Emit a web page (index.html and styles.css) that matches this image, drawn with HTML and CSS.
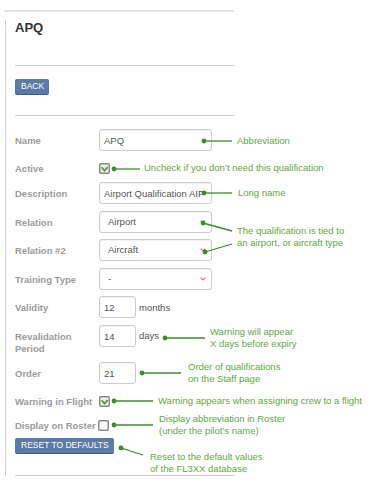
FILE: index.html
```html
<!doctype html>
<html lang=en>
<head>
	<meta charset=utf-8>
	<title>APQ</title>
	<link rel="stylesheet" href="styles.css">
</head>
<body>
	<div class="topline"></div>
	<div class="panel">
		<h1>APQ</h1>
		<hr class="under-title">
		<button class="btn" type="button">Back</button>
		<hr class="after-back">

		<form class="qual">
			<div class="row r-name">
				<label>Name</label>
				<input class="field" value="APQ">
			</div>
			<div class="row r-check r-active">
				<label>Active</label>
				<span class="box"><svg width="11" height="11" viewBox="0 0 11 11"><rect x="0.75" y="0.75" width="9.5" height="9.5" rx="1" fill="#eeeeee" stroke="#8a8a8a" stroke-width="1.5"/><polyline points="2.6,4.3 5.5,7.6 8.6,4.1" fill="none" stroke="#4f9c38" stroke-width="1.7"/></svg></span>
			</div>
			<div class="row r-desc">
				<label>Description</label>
				<input class="field" value="Airport Qualification AIP">
			</div>
			<div class="row r-rel">
				<label>Relation</label>
				<div class="field select">Airport<svg class="chev" width="6" height="4" viewBox="0 0 6 4"><polyline points="0.6,0.6 3,3 5.4,0.6" fill="none" stroke="#e8744e" stroke-width="1.2"/></svg></div>
			</div>
			<div class="row r-rel2">
				<label>Relation #2</label>
				<div class="field select">Aircraft<svg class="chev" width="6" height="4" viewBox="0 0 6 4"><polyline points="0.6,0.6 3,3 5.4,0.6" fill="none" stroke="#e8744e" stroke-width="1.2"/></svg></div>
			</div>
			<div class="row r-type">
				<label>Training Type</label>
				<div class="field select">-<svg class="chev" width="6" height="4" viewBox="0 0 6 4"><polyline points="0.6,0.6 3,3 5.4,0.6" fill="none" stroke="#e8744e" stroke-width="1.2"/></svg></div>
			</div>
			<div class="row r-valid">
				<label>Validity</label>
				<input class="field short" value="12">
				<span class="unit">months</span>
			</div>
			<div class="row r-reval">
				<label>Revalidation Period</label>
				<input class="field short" value="14">
				<span class="unit">days</span>
			</div>
			<div class="row r-order">
				<label>Order</label>
				<input class="field short" value="21">
			</div>
			<div class="row r-check r-warn">
				<label>Warning in Flight</label>
				<span class="box"><svg width="11" height="11" viewBox="0 0 11 11"><rect x="0.75" y="0.75" width="9.5" height="9.5" rx="1" fill="#eeeeee" stroke="#8a8a8a" stroke-width="1.5"/><polyline points="2.6,4.3 5.5,7.6 8.6,4.1" fill="none" stroke="#4f9c38" stroke-width="1.7"/></svg></span>
			</div>
			<div class="row r-check r-roster">
				<label>Display on Roster</label>
				<span class="box"><svg width="11" height="11" viewBox="0 0 11 11"><rect x="0.75" y="0.75" width="9.5" height="9.5" rx="1" fill="#ffffff" stroke="#8a8a8a" stroke-width="1.5"/></svg></span>
			</div>
			<button class="btn reset" type="button">Reset to defaults</button>
		</form>

		<hr class="bottom">
	</div>

	<!-- callouts drawn over the form -->
	<svg class="callouts" width="371" height="485" viewBox="0 0 371 485">
		<g stroke="#3d8c2b" stroke-width="1.3" fill="none">
			<line x1="204" y1="141" x2="232" y2="141"/>
			<line x1="114" y1="169" x2="140" y2="169"/>
			<line x1="204" y1="193" x2="232" y2="193"/>
			<line x1="203" y1="223" x2="232" y2="231"/>
			<line x1="205" y1="252" x2="232" y2="244"/>
			<line x1="165" y1="338" x2="205" y2="338"/>
			<line x1="142" y1="373" x2="181" y2="373"/>
			<line x1="114" y1="401" x2="153" y2="401"/>
			<line x1="114" y1="425" x2="153" y2="425"/>
			<line x1="121" y1="448" x2="143" y2="455"/>
		</g>
		<g fill="#3d8c2b">
			<circle cx="204" cy="141" r="2.4"/>
			<circle cx="114" cy="169" r="2.4"/>
			<circle cx="204" cy="193" r="2.4"/>
			<circle cx="203" cy="223" r="2.4"/>
			<circle cx="205" cy="252" r="2.4"/>
			<circle cx="165" cy="338" r="2.4"/>
			<circle cx="142" cy="373" r="2.4"/>
			<circle cx="114" cy="401" r="2.4"/>
			<circle cx="114" cy="425" r="2.4"/>
			<circle cx="121" cy="448" r="2.4"/>
		</g>
	</svg>
	<div class="note n-abbr">Abbreviation</div>
	<div class="note n-active">Uncheck if you don’t need this qualification</div>
	<div class="note n-long">Long name</div>
	<div class="note n-rel">The qualification is tied to<br>an airport, or aircraft type</div>
	<div class="note n-reval">Warning will appear<br>X days before expiry</div>
	<div class="note n-order">Order of qualifications<br>on the Staff page</div>
	<div class="note n-warn">Warning appears when assigning crew to a flight</div>
	<div class="note n-roster">Display abbreviation in Roster<br>(under the pilot’s name)</div>
	<div class="note n-reset">Reset to the default values<br>of the FL3XX database</div>
</body>
</html>
```

FILE: styles.css
```css
body	{ margin:0; position:relative; width:371px; height:485px; background:#fff;
		  font-family:"Liberation Sans", Arial, sans-serif; }

.topline { margin:10px 0 0 4px; width:230px; height:2px; background:#e3e3e3; }
.panel	{ margin:8px 0 0 5px; width:219px; padding-left:9px; border-left:1px solid #d2d2d2; }

h1		{ margin:1px 0 0; font-size:13px; line-height:15px; color:#333; }
hr		{ margin:30px 0 0; height:0; border:0; border-top:1px solid #cfcfcf; }
hr.after-back { margin-top:20px; }
hr.bottom { margin-top:21px; }

.btn	{ display:block; margin-top:13px; height:16px; padding:0 5px 0 6px;
		  font:8.5px/15px "Liberation Sans", Arial, sans-serif; text-transform:uppercase;
		  color:#fff; background:#5b7ba6; border:0; border-bottom:1px solid #3f5f88;
		  border-radius:2px; }
.btn.reset { margin-top:7px; padding:0 5px 0 6px; }

.qual	{ margin-top:13px; }
.row	{ display:flex; align-items:center; height:22px; }
.row label { flex:0 0 84px; font-size:9.5px; font-weight:bold; color:#9b9b9b; }
.r-check { height:11px; }

.r-active { margin-top:12px; }
.r-desc	{ margin-top:8px; }
.r-rel	{ margin-top:7px; }
.r-rel2	{ margin-top:6px; }
.r-type	{ margin-top:7px; }
.r-valid { margin-top:6px; }
.r-reval { margin-top:7px; align-items:flex-start; height:29px; }
.r-reval label { padding-top:6px; line-height:11.5px; }
.r-reval .unit { line-height:22px; }
.r-order { margin-top:8px; }
.r-warn	{ margin-top:12px; }
.r-roster { margin-top:13px; }
.r-roster .box { margin-left:-1px; }

.field	{ box-sizing:border-box; width:113px; height:22px; margin:0; padding:0 4px;
		  font:9.5px/20px "Liberation Sans", Arial, sans-serif; color:#555;
		  border:1px solid #cccccc; border-radius:3px; background:#fff;
		  box-shadow:inset 0 1px 1px rgba(0,0,0,0.05); outline:none; }
.field.short { width:37px; }
.select	{ position:relative; padding-left:8px; }
.chev	{ position:absolute; right:5px; top:8px; }
.unit	{ margin-left:3px; font-size:9.5px; color:#555; }
.box	{ display:block; width:11px; height:11px; }
.box svg { display:block; }

.callouts { position:absolute; left:0; top:0; pointer-events:none; }
.note	{ position:absolute; font-size:9.5px; line-height:11.5px; color:#62a842; white-space:nowrap; }
.n-abbr	{ left:237px; top:135px; }
.n-active { left:144px; top:162px; }
.n-long	{ left:238px; top:187px; }
.n-rel	{ left:237px; top:225px; }
.n-reval { left:210px; top:326px; }
.n-order { left:188px; top:361px; }
.n-warn	{ left:158px; top:395px; }
.n-roster { left:159px; top:413px; }
.n-reset { left:150px; top:451px; }
```
